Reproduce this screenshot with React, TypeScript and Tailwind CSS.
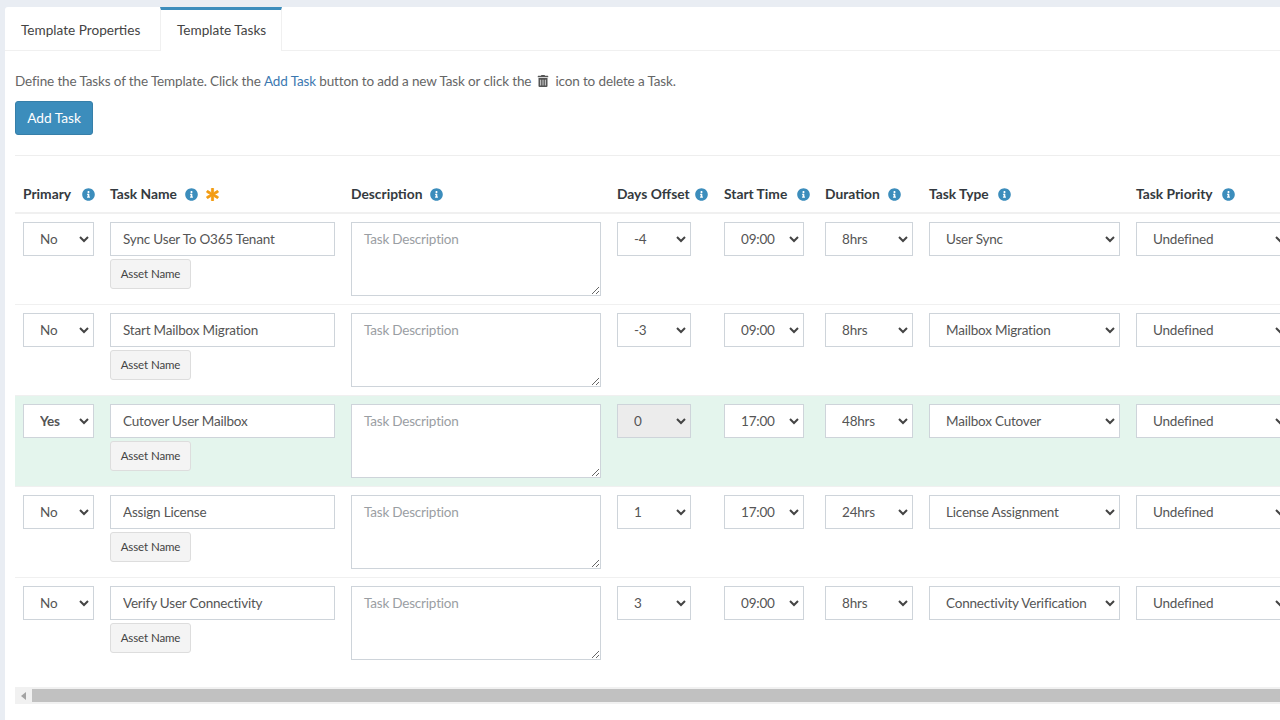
import { FaAsterisk, FaInfoCircle, FaTrashAlt } from "react-icons/fa";

interface Task {
  primary: string;
  name: string;
  offset: string;
  start: string;
  duration: string;
  type: string;
}

const TASKS: Task[] = [
  { primary: "No", name: "Sync User To O365 Tenant", offset: "-4", start: "09:00", duration: "8hrs", type: "User Sync" },
  { primary: "No", name: "Start Mailbox Migration", offset: "-3", start: "09:00", duration: "8hrs", type: "Mailbox Migration" },
  { primary: "Yes", name: "Cutover User Mailbox", offset: "0", start: "17:00", duration: "48hrs", type: "Mailbox Cutover" },
  { primary: "No", name: "Assign License", offset: "1", start: "17:00", duration: "24hrs", type: "License Assignment" },
  { primary: "No", name: "Verify User Connectivity", offset: "3", start: "09:00", duration: "8hrs", type: "Connectivity Verification" },
];

function Info() {
  return <FaInfoCircle className="inline-block shrink-0 text-[13px] text-[#3c8dbc]" />;
}

function Head({ label, w, gap = "gap-[8px]", children }: { label: string; w: string; gap?: string; children?: React.ReactNode }) {
  return (
    <th className={`${w} h-[37px] px-2 text-left align-middle font-bold text-[13.8px] text-[#343a40] whitespace-nowrap`}>
      <span className={`flex items-center ${gap}`}>
        {label}
        <Info />
        {children}
      </span>
    </th>
  );
}

function Select({ value, className, disabled, bold }: { value: string; className: string; disabled?: boolean; bold?: boolean }) {
  return (
    <div className={`relative h-[34px] ${className}`}>
      <select
        defaultValue={value}
        disabled={disabled}
        className={`appearance-none w-full h-full border border-[#ced4da] pl-4 pr-6 pt-[1px] text-[13.5px] tracking-[-0.2px] text-[#555] opacity-100 ${disabled ? "bg-[#ececec]" : "bg-white"} ${bold ? "font-bold" : ""}`}
      >
        <option>{value}</option>
      </select>
      <svg className="absolute right-[5px] top-[13px] w-[10px] h-[8px] pointer-events-none" viewBox="0 0 10 8" fill="none" stroke="#444" strokeWidth="2">
        <path d="M1 2l4 4 4-4" />
      </svg>
    </div>
  );
}

function Row({ task, last }: { task: Task; last: boolean }) {
  const isPrimary = task.primary === "Yes";
  return (
    <tr className={`${last ? "" : "border-b border-[#f0f0f0]"} ${isPrimary ? "bg-[#e4f5ed]" : ""}`}>
      <td className="h-[91px] px-2 pt-[8px] align-top">
        <Select value={task.primary} className="w-[71px]" bold={isPrimary} />
      </td>
      <td className="px-2 pt-[8px] align-top">
        <input
          defaultValue={task.name}
          className="block w-[225px] h-[34px] border border-[#ced4da] bg-white px-3 text-[13.5px] tracking-[-0.2px] text-[#555]"
        />
        <button className="block mt-[3px] w-[81px] h-[30px] rounded-[3px] border border-[#ddd] bg-[#f4f4f4] text-[11.5px] tracking-[-0.1px] text-[#444]">
          Asset Name
        </button>
      </td>
      <td className="px-2 pt-[8px] align-top">
        <textarea
          placeholder="Task Description"
          className="block w-[250px] h-[74px] border border-[#ced4da] bg-white px-3 py-[6px] text-[13.5px] tracking-[-0.2px] text-[#555] placeholder:text-[#9a9ea3]"
        />
      </td>
      <td className="px-2 pt-[8px] align-top">
        <Select value={task.offset} className="w-[74px]" disabled={isPrimary} />
      </td>
      <td className="px-2 pt-[8px] align-top">
        <Select value={task.start} className="w-[80px]" />
      </td>
      <td className="px-2 pt-[8px] align-top">
        <Select value={task.duration} className="w-[88px]" />
      </td>
      <td className="px-2 pt-[8px] align-top">
        <Select value={task.type} className="w-[191px]" />
      </td>
      <td className="px-2 pt-[8px] align-top">
        <Select value="Undefined" className="w-[154px]" />
      </td>
    </tr>
  );
}

export default function App() {
  return (
    <div className="h-[720px] w-[1280px] overflow-hidden bg-[#e9edf3] pl-[5px] pt-[7px] font-['Lato','Noto_Sans',sans-serif]">
      <div className="h-full bg-white rounded-tl-[3px]">
        <div className="flex h-[44px] border-b border-[#f0f0f0]">
          <div className="flex w-[155px] items-center pl-4 pt-[3px] text-[13.6px] text-[#444]">Template Properties</div>
          <div className="flex w-[122px] h-[44px] items-center pl-4 border-t-[3px] border-x border-t-[#3c8dbc] border-x-[#f0f0f0] bg-white text-[13.6px] text-[#444]">
            Template Tasks
          </div>
        </div>
        <div className="pl-[10px] pt-[20px]">
          <p className="flex items-center h-[20px] text-[13.5px] tracking-[-0.13px] text-[#666] whitespace-nowrap">
            Define the Tasks of the Template. Click the&nbsp;<span className="text-[#3c78b0]">Add Task</span>&nbsp;button to add a new Task or click the
            <FaTrashAlt className="mx-[6px] text-[12px] text-[#555]" />
            icon to delete a Task.
          </p>
          <button className="block mt-[10px] w-[78px] h-[34px] rounded-[3px] border border-[#367fa9] bg-[#3c8dbc] text-[13.7px] text-white">
            Add Task
          </button>
          <div className="mt-[20px] h-px bg-[#eee]" />
          <div className="mt-[20px] overflow-hidden">
            <table className="table-fixed border-collapse w-[1283px]">
              <thead>
                <tr className="border-b-2 border-[#f0f0f0]">
                  <Head label="Primary" w="w-[87px]" gap="gap-[11px]" />
                  <Head label="Task Name" w="w-[241px]">
                    <FaAsterisk className="text-[13px] text-[#f39c12] stroke-[#f39c12] stroke-[30px]" />
                  </Head>
                  <Head label="Description" w="w-[266px]" />
                  <Head label="Days Offset" w="w-[107px]" gap="gap-[5px]" />
                  <Head label="Start Time" w="w-[101px]" gap="gap-[10px]" />
                  <Head label="Duration" w="w-[104px]" />
                  <Head label="Task Type" w="w-[207px]" gap="gap-[9px]" />
                  <Head label="Task Priority" w="w-[170px]" gap="gap-[9px]" />
                </tr>
              </thead>
              <tbody>
                {TASKS.map((t, i) => <Row key={t.name} task={t} last={i === TASKS.length - 1} />)}
              </tbody>
            </table>
          </div>
          <div className="mt-[19px] flex h-[17px] items-center bg-[#f1f1f1]">
            <span className="flex w-[17px] justify-center">
              <span className="border-y-[4px] border-r-[5px] border-y-transparent border-r-[#a3a3a3]" />
            </span>
            <div className="h-[13px] flex-1 bg-[#c1c1c1]" />
          </div>
        </div>
      </div>
    </div>
  );
}
